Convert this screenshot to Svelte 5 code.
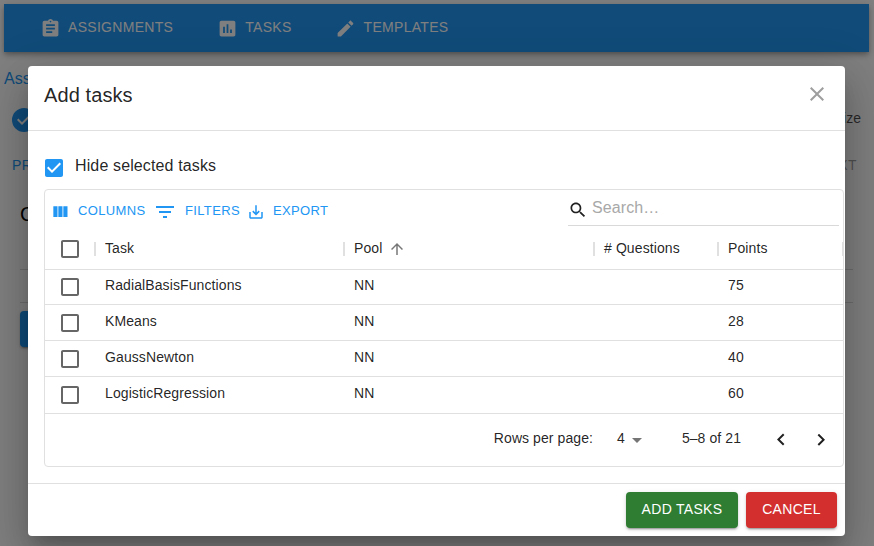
<script>
  const tabs = [
    { label: 'ASSIGNMENTS', icon: 'M19 3h-4.18C14.4 1.84 13.3 1 12 1c-1.3 0-2.4.84-2.82 2H5c-1.1 0-2 .9-2 2v14c0 1.1.9 2 2 2h14c1.1 0 2-.9 2-2V5c0-1.1-.9-2-2-2zm-7 0c.55 0 1 .45 1 1s-.45 1-1 1-1-.45-1-1 .45-1 1-1zm2 14H7v-2h7v2zm3-4H7v-2h10v2zm0-4H7V7h10v2z' },
    { label: 'TASKS', icon: 'M19 3H5c-1.1 0-2 .9-2 2v14c0 1.1.9 2 2 2h14c1.1 0 2-.9 2-2V5c0-1.1-.9-2-2-2zM9 17H7v-7h2v7zm4 0h-2V7h2v10zm4 0h-2v-4h2v4z' },
    { label: 'TEMPLATES', icon: 'M3 17.25V21h3.75L17.81 9.94l-3.75-3.75L3 17.25zM20.71 7.04c.39-.39.39-1.02 0-1.41l-2.34-2.34c-.39-.39-1.02-.39-1.41 0l-1.83 1.83 3.75 3.75 1.83-1.83z' }
  ];
  const rows = [
    { task: 'RadialBasisFunctions', pool: 'NN', points: 75 },
    { task: 'KMeans', pool: 'NN', points: 28 },
    { task: 'GaussNewton', pool: 'NN', points: 40 },
    { task: 'LogisticRegression', pool: 'NN', points: 60 }
  ];
  const emptyBox = 'M19 5v14H5V5h14m0-2H5c-1.1 0-2 .9-2 2v14c0 1.1.9 2 2 2h14c1.1 0 2-.9 2-2V5c0-1.1-.9-2-2-2z';
  const checkedBox = 'M19 3H5c-1.11 0-2 .9-2 2v14c0 1.1.89 2 2 2h14c1.11 0 2-.9 2-2V5c0-1.1-.89-2-2-2zm-9 14l-5-5 1.41-1.41L10 14.17l7.59-7.59L19 8l-9 9z';
</script>

{#snippet icon(d, size)}
  <svg class="icon" width={size} height={size} viewBox="0 0 24 24" aria-hidden="true"><path {d} /></svg>
{/snippet}

<div class="screen">
  <div class="page">
    <nav>
      {#each tabs as tab}
        <div class="tab">{@render icon(tab.icon, 21)}<span>{tab.label}</span></div>
      {/each}
    </nav>
    <div class="crumb">Assignments</div>
    <div class="steps">
      {@render icon('M12 0a12 12 0 1 0 0 24 12 12 0 0 0 0-24zm-2 17l-5-5 1.4-1.4 3.6 3.6 7.6-7.6L19 8l-9 9z', 24)}
      <span>Finalize</span>
    </div>
    <div class="paging"><span class="prev">PREV</span><span class="next">NEXT</span></div>
    <h3>C</h3>
    <div class="slot"></div>
    <div class="page-button"></div>
  </div>
  <div class="backdrop"></div>

  <div class="dialog" role="dialog" aria-label="Add tasks">
    <header>
      <h2>Add tasks</h2>
      <button class="close" aria-label="Close">{@render icon('M19 6.41L17.59 5 12 10.59 6.41 5 5 6.41 10.59 12 5 17.59 6.41 19 12 13.41 17.59 19 19 17.59 13.41 12z', 24)}</button>
    </header>
    <main>
      <div class="hide"><span class="checked">{@render icon(checkedBox, 24)}</span><span class="label">Hide selected tasks</span></div>
      <div class="datagrid">
        <div class="toolbar">
          <button class="columns">{@render icon('M10 18h5V5h-5v13zm-6 0h5V5H4v13zM16 5v13h5V5h-5z', 20)}<span>COLUMNS</span></button>
          <button class="filters">{@render icon('M10 18h4v-2h-4v2zM3 6v2h18V6H3zm3 7h12v-2H6v2z', 24)}<span>FILTERS</span></button>
          <button class="export">{@render icon('M19 12v7H5v-7H3v7c0 1.1.9 2 2 2h14c1.1 0 2-.9 2-2v-7h-2zm-6 .67l2.59-2.58L17 11.5l-5 5-5-5 1.41-1.41L11 12.67V3h2z', 18)}<span>EXPORT</span></button>
          <div class="search">
            {@render icon('M15.5 14h-.79l-.28-.27C15.41 12.59 16 11.11 16 9.5 16 5.91 13.09 3 9.5 3S3 5.91 3 9.5 5.91 16 9.5 16c1.61 0 3.09-.59 4.23-1.57l.27.28v.79l5 4.99L20.49 19l-4.99-5zm-6 0C7.01 14 5 11.99 5 9.5S7.01 5 9.5 5 14 7.01 14 9.5 11.99 14 9.5 14z', 20)}
            <span>Search…</span>
          </div>
        </div>
        <div class="row head">
          <div class="box">{@render icon(emptyBox, 24)}</div>
          <div class="cell">Task</div>
          <div class="cell">Pool {@render icon('M4 12l1.41 1.41L11 7.83V20h2V7.83l5.58 5.59L20 12l-8-8-8 8z', 18)}</div>
          <div class="cell"># Questions</div>
          <div class="cell">Points</div>
          <div class="cell"></div>
        </div>
        {#each rows as row}
          <div class="row">
            <div class="box">{@render icon(emptyBox, 24)}</div>
            <div class="cell"><span>{row.task}</span></div>
            <div class="cell"><span>{row.pool}</span></div>
            <div class="cell"></div>
            <div class="cell"><span>{row.points}</span></div>
          </div>
        {/each}
        <div class="footer">
          <span class="rpp">Rows per page:</span>
          <span class="count">4</span>
          {@render icon('M7 10l5 5 5-5z', 24)}
          <span class="range">5–8 of 21</span>
          <button aria-label="Previous page">{@render icon('M15.41 16.09l-4.58-4.59 4.58-4.59L14 5.5l-6 6 6 6z', 24)}</button>
          <button aria-label="Next page">{@render icon('M8.59 16.34l4.58-4.59-4.58-4.59L10 5.75l6 6-6 6z', 24)}</button>
        </div>
      </div>
    </main>
    <div class="actions">
      <button class="add"><span>ADD TASKS</span></button>
      <button class="cancel"><span>CANCEL</span></button>
    </div>
  </div>
</div>

<style>
  .screen { position: relative; width: 874px; height: 546px; overflow: hidden; font-family: "Liberation Sans", Arial, sans-serif; font-size: 14px; color: rgba(0,0,0,.87); background: #fff; }
  .screen * { box-sizing: border-box; }
  button { border: 0; padding: 0; background: none; font: inherit; color: inherit; }
  .icon { display: block; flex: none; fill: currentColor; }

  .page { height: 546px; padding: 4px 5px 0 4px; }
  nav { display: flex; align-items: center; gap: 43.5px; height: 48px; padding-left: 35.5px; background: #2196f3; color: #fff; box-shadow: 0 2px 4px -1px rgba(0,0,0,.2), 0 4px 5px rgba(0,0,0,.14), 0 1px 10px rgba(0,0,0,.12); }
  .tab { display: flex; align-items: center; gap: 7.5px; letter-spacing: .3px; }
  .tab span { margin-top: -2px; }
  .crumb { margin-top: 17px; height: 20px; line-height: 20px; font-size: 16px; color: #2196f3; }
  .steps { display: flex; align-items: center; justify-content: space-between; height: 24px; margin: 19px 8px 0 8px; color: #2196f3; }
  .steps span { color: rgba(0,0,0,.7); margin-top: -4px; }
  .paging { display: flex; justify-content: space-between; height: 20px; line-height: 20px; margin: 23px 12px 0 8px; letter-spacing: .4px; }
  .prev { color: #2196f3; }
  .next { color: rgba(0,0,0,.38); }
  h3 { margin: 27px 0 0 16px; height: 24px; line-height: 24px; font-size: 20px; font-weight: 400; color: #000; }
  .slot { height: 34px; margin: 43px 16px 0; border: solid rgba(0,0,0,.14); border-width: 1px 0; }
  .page-button { width: 160px; height: 36px; margin: 8px 0 0 16px; background: #2196f3; border-radius: 4px; box-shadow: 0 3px 1px -2px rgba(0,0,0,.2), 0 2px 2px rgba(0,0,0,.14), 0 1px 5px rgba(0,0,0,.12); }
  .backdrop { position: absolute; inset: 0; background: rgba(0,0,0,.5); }

  .dialog { position: absolute; left: 28px; top: 66px; width: 817px; height: 470px; display: flex; flex-direction: column; background: #fff; border-radius: 4px; box-shadow: 0 11px 15px -7px rgba(0,0,0,.2), 0 24px 38px 3px rgba(0,0,0,.14), 0 9px 46px 8px rgba(0,0,0,.12); }
  header { display: flex; justify-content: space-between; height: 64px; padding: 16px 16px 0; }
  h2 { margin: -3px 0 0; font-size: 20px; line-height: 32px; font-weight: 400; letter-spacing: .1px; }
  .close { width: 24px; height: 24px; color: #9e9e9e; }
  main { height: 354px; padding: 25px 0 0 16px; border: solid #e0e0e0; border-width: 1px 0; }
  .hide { display: flex; align-items: center; height: 24px; margin-left: -2px; font-size: 16px; letter-spacing: .13px; }
  .checked { color: #2196f3; }
  .label { margin: -5px 0 0 9px; }
  .datagrid { width: 800px; height: 278px; margin-top: 9px; border: 1px solid #e0e0e0; border-radius: 4px; overflow: hidden; }

  .toolbar { display: flex; height: 38px; color: #2196f3; font-size: 13px; }
  .toolbar button { display: flex; align-items: center; height: 44px; letter-spacing: .35px; }
  .toolbar button span { margin-top: -3px; }
  .columns { width: 108px; padding-left: 5px; gap: 8px; }
  .filters { width: 93px; gap: 8px; }
  .toolbar .export { gap: 8px; padding-left: 1px; }
  .search { display: flex; align-items: center; width: 271px; height: 36px; margin: 0 4px 0 auto; border-bottom: 1px solid #d9d9d9; color: rgba(0,0,0,.87); font-size: 16px; letter-spacing: .1px; }
  .search .icon { margin: 4px 4px 0 0; }
  .search span { color: #a8a8a8; }

  .row { display: grid; grid-template-columns: 50px 249px 250px 124px 125px 10px; height: 36px; border-bottom: 1px solid #e0e0e0; align-items: center; letter-spacing: .1px; }
  .head { height: 42px; }
  .box { padding-left: 13px; color: #666; }
  .cell { display: flex; align-items: center; height: 20px; padding-left: 10px; white-space: nowrap; }
  .row:not(.head) .cell { margin-top: -4px; }
  .row:nth-child(3) { height: 35px; }
  .row:nth-child(6) { height: 37px; }
  .head .cell { position: relative; margin-top: -2px; letter-spacing: .1px; }
  .head .cell::before { content: ''; position: absolute; left: -1px; top: 4px; width: 2px; height: 14px; background: #e0e0e0; }
  .head .icon { margin: 2px 0 0 6px; }
  .head .box .icon { margin: 0; }
  .head .cell .icon { color: #777; }

  .footer { display: flex; align-items: center; justify-content: flex-end; height: 52px; padding-right: 10px; letter-spacing: .08px; }
  .footer span { margin-top: -4px; }
  .footer .count { margin-left: 24px; }
  .footer > .icon { color: #757575; }
  .footer .range { margin: -4px 28px 0 33px; }
  .footer button + button { margin-left: 16px; }

  .actions { display: flex; justify-content: flex-end; gap: 8px; padding: 8px 8px 0; color: #fff; }
  .actions button { height: 36px; border-radius: 4px; box-shadow: 0 3px 1px -2px rgba(0,0,0,.2), 0 2px 2px rgba(0,0,0,.14), 0 1px 5px rgba(0,0,0,.12); letter-spacing: .3px; }
  .actions span { display: block; margin-top: -2px; }
  .actions .add { width: 112px; background: #2e7d32; }
  .actions .cancel { width: 91px; background: #d32f2f; }
</style>
